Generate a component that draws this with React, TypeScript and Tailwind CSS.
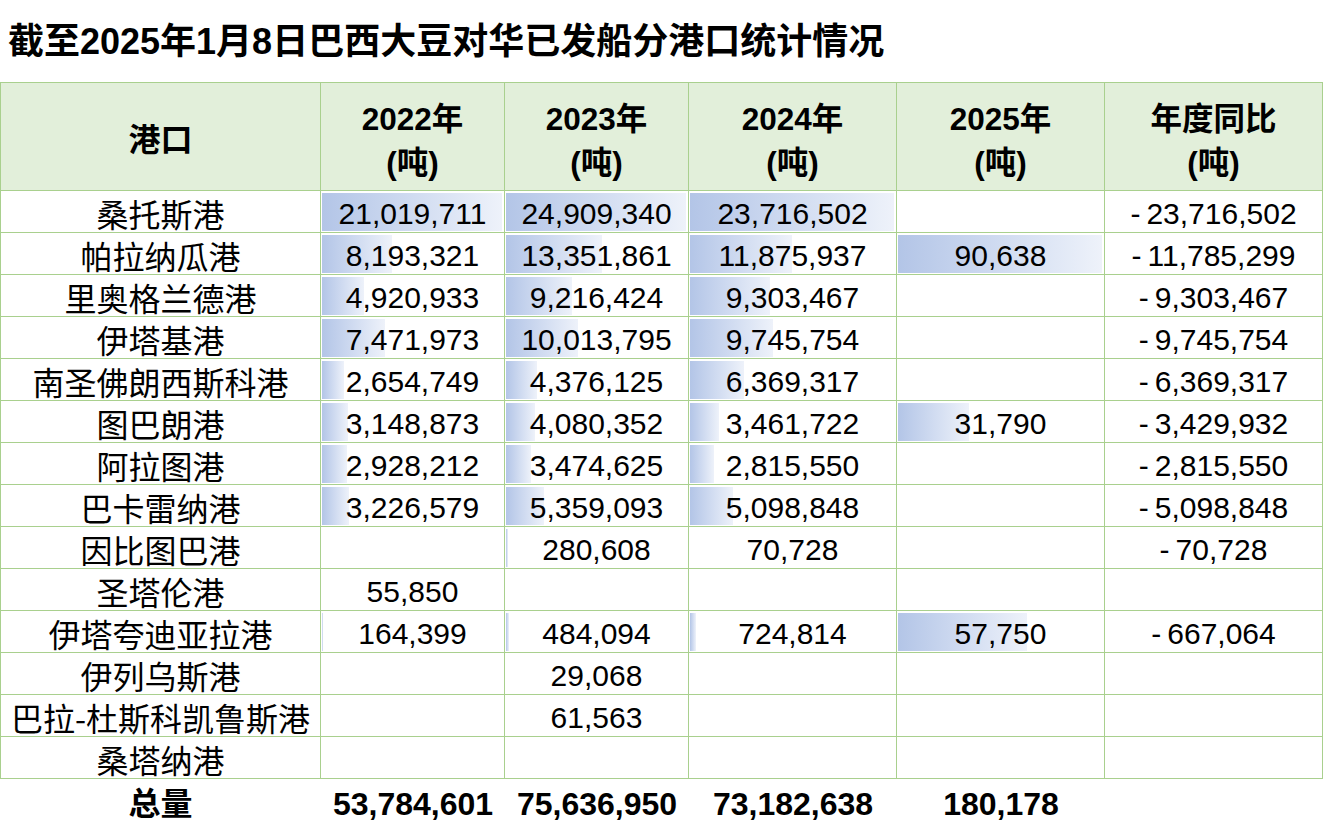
import React from "react";

type Row = [string, number | null, number | null, number | null, number | null, number | null];

const ROWS: Row[] = [
  ["桑托斯港", 21019711, 24909340, 23716502, null, -23716502],
  ["帕拉纳瓜港", 8193321, 13351861, 11875937, 90638, -11785299],
  ["里奥格兰德港", 4920933, 9216424, 9303467, null, -9303467],
  ["伊塔基港", 7471973, 10013795, 9745754, null, -9745754],
  ["南圣佛朗西斯科港", 2654749, 4376125, 6369317, null, -6369317],
  ["图巴朗港", 3148873, 4080352, 3461722, 31790, -3429932],
  ["阿拉图港", 2928212, 3474625, 2815550, null, -2815550],
  ["巴卡雷纳港", 3226579, 5359093, 5098848, null, -5098848],
  ["因比图巴港", null, 280608, 70728, null, -70728],
  ["圣塔伦港", 55850, null, null, null, null],
  ["伊塔夸迪亚拉港", 164399, 484094, 724814, 57750, -667064],
  ["伊列乌斯港", null, 29068, null, null, null],
  ["巴拉-杜斯科凯鲁斯港", null, 61563, null, null, null],
  ["桑塔纳港", null, null, null, null, null],
];

// data bar scale per year column: max value and usable bar width in px
const BAR_MAX = [21019711, 24909340, 23716502, 90638];
const BAR_WIDTH = [180, 180, 204, 204];

const HEADERS = ["2022年", "2023年", "2024年", "2025年", "年度同比"];

const fmt = (n: number) => (n < 0 ? "-\u2009" + Math.abs(n).toLocaleString("en-US") : n.toLocaleString("en-US"));

const cell = "relative flex items-center justify-center border-r border-b border-[#a9d08e]";

function NumCell({ value, bar }: { value: number | null; bar?: number }) {
  const w = value != null && bar != null ? Math.floor((value / BAR_MAX[bar]) * BAR_WIDTH[bar]) : 0;
  return (
    <div className={`${cell} h-[42px]`}>
      {w > 0 && (
        <div
          className="absolute left-[1px] top-[2px] bottom-[1px] bg-gradient-to-r from-[#b3c5e7] to-[#eef2fa]"
          style={{ width: w }}
        />
      )}
      {value != null && (
        <span className="relative pt-[5px] text-[30px] leading-none text-black">{fmt(value)}</span>
      )}
    </div>
  );
}

export default function App() {
  return (
    <div className="w-[1324px] h-[828px] overflow-hidden bg-white font-['Liberation_Sans','Noto_Sans_CJK_SC',sans-serif] text-black">
      {/* Title */}
      <div className="flex h-[82px] items-center pl-[8px] pt-[2px] text-[36px] font-bold leading-none">
        截至2025年1月8日巴西大豆对华已发船分港口统计情况
      </div>

      {/* Table */}
      <div className="grid w-[1323px] grid-cols-[320px_184px_184px_208px_208px_218px] border-l border-t border-[#a9d08e]">
        <div className={`${cell} h-[108px] bg-[#e2efda] pt-[6px] text-[32px] font-bold`}>港口</div>
        {HEADERS.map((h) => (
          <div key={h} className={`${cell} h-[108px] flex-col bg-[#e2efda] pt-[8px] text-[31.5px] font-bold leading-[44px]`}>
            <span>{h}</span>
            <span>(吨)</span>
          </div>
        ))}

        {ROWS.map((r) => (
          <React.Fragment key={r[0]}>
            <div className={`${cell} h-[42px] whitespace-nowrap pt-[3px] text-[32px] leading-none font-['Noto_Sans_CJK_SC',sans-serif]`}>
              {r[0]}
            </div>
            <NumCell value={r[1]} bar={0} />
            <NumCell value={r[2]} bar={1} />
            <NumCell value={r[3]} bar={2} />
            <NumCell value={r[4]} bar={3} />
            <NumCell value={r[5]} />
          </React.Fragment>
        ))}
      </div>

      {/* Total */}
      <div className="grid h-[50px] grid-cols-[321px_184px_184px_208px_208px_218px] font-bold leading-none">
        <div className="flex items-center justify-center text-[32px]">总量</div>
        <div className="flex items-center justify-center text-[32px]">53,784,601</div>
        <div className="flex items-center justify-center text-[32px]">75,636,950</div>
        <div className="flex items-center justify-center text-[32px]">73,182,638</div>
        <div className="flex items-center justify-center text-[32px]">180,178</div>
        <div />
      </div>
    </div>
  );
}
